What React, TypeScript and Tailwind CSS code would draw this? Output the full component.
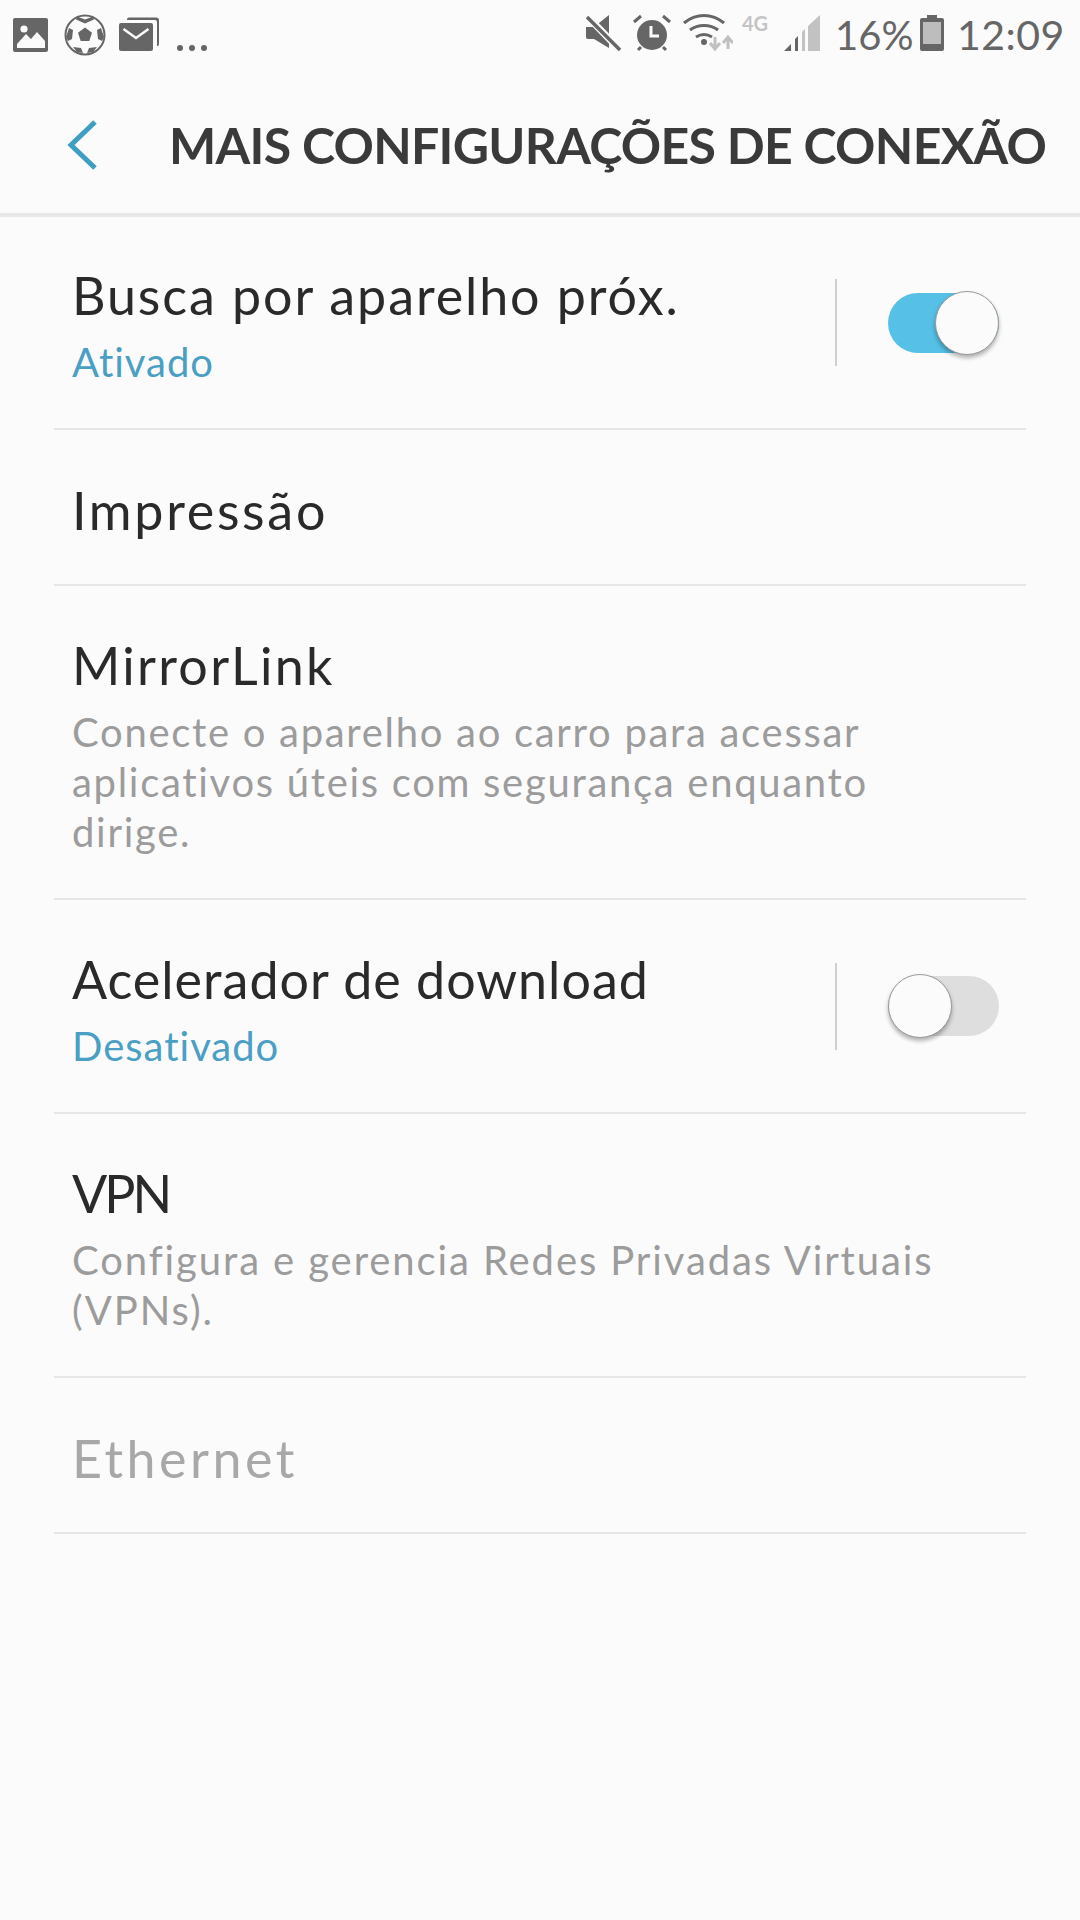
const FONT = "font-['Lato','Noto_Sans',sans-serif]";

function Toggle({ on }: { on: boolean }) {
  return (
    <div className={`flex h-[60px] w-[111px] items-center rounded-full ${on ? "justify-end bg-[#56c0e7]" : "justify-start bg-[#dedede]"}`}>
      <div className="h-[64px] w-[64px] rounded-full border border-[#9a9a9a] bg-[#fbfbfb] shadow-[0_3px_4px_rgba(0,0,0,0.3)]" />
    </div>
  );
}

function StatusLeft() {
  return (
    <div className="mb-[3px] flex items-end">
      <svg width="36" height="34" viewBox="0 0 36 34" className="ml-[13px]">
        <rect width="35" height="34" rx="2" fill="#666" />
        <path d="M4 26l9-10 5 5 6-7 8 9v7H4z" fill="#fbfbfb" />
        <circle cx="11" cy="11" r="3.6" fill="#fbfbfb" />
      </svg>
      <svg width="42" height="42" viewBox="0 0 42 42" className="ml-[15px] mb-[-4px]">
        <circle cx="21" cy="21" r="19.5" fill="#fbfbfb" stroke="#666" strokeWidth="2" />
        <path d="M21 13.500l7 5.200-2.700 8.300h-8.600l-2.700-8.300z" fill="#666" />
        <path d="M13 2.500l8 3 8-3 1 3-9 4-9-4zM2 23l3-9 4 2-1 9-4 2zM40 23l-3-9-4 2 1 9 4 2zM9 33l8 1 2 5-6-1zM33 33l-8 1-2 5 6-1z" fill="#666" />
      </svg>
      <svg width="41" height="35" viewBox="0 0 41 35" className="ml-[13px]">
        <path d="M8 2.500a2 2 0 0 1 2-2h27a3 3 0 0 1 3 3v24a2 2 0 0 1-2 1.500v-24a2 2 0 0 0-2-2H8z" fill="#666" />
        <rect y="6" width="34" height="28" rx="2" fill="#666" />
        <path d="M4.500 12l12.500 9 12.500-9" fill="none" stroke="#fbfbfb" strokeWidth="2.500" />
      </svg>
      <div className="mb-[1px] ml-[17px] flex gap-[6px]">
        <div className="h-[6px] w-[6px] rounded-full bg-[#666]" />
        <div className="h-[6px] w-[6px] rounded-full bg-[#666]" />
        <div className="h-[6px] w-[6px] rounded-full bg-[#666]" />
      </div>
    </div>
  );
}

function StatusRight() {
  return (
    <div className="flex items-center">
      <svg width="36" height="37" viewBox="0 0 36 37">
        <path d="M0 13h8l15-12v33L8 25H2a2 2 0 0 1-2-2z" fill="#666" />
        <path d="M1 2l32 33" stroke="#fbfbfb" strokeWidth="7" />
        <path d="M1 3l33 33" stroke="#666" strokeWidth="3.500" />
      </svg>
      <svg width="38" height="38" viewBox="0 0 38 38" className="ml-[11px]">
        <circle cx="19" cy="21" r="15" fill="#666" />
        <path d="M1 8l7-6M37 8l-7-6M8 33l-3 3M30 33l3 3" stroke="#666" strokeWidth="3" />
        <path d="M18 12v10h8" fill="none" stroke="#fbfbfb" strokeWidth="3" />
      </svg>
      <svg width="50" height="38" viewBox="0 0 50 38" className="ml-[12px]">
        <path d="M1 9c12-10 28-10 40 0M7 16c8-6 20-6 28 0M13 23c5-3 11-3 16 0" fill="none" stroke="#666" strokeWidth="3" />
        <circle cx="21" cy="28" r="3" fill="#666" />
        <path d="M32 23v10M27 29l5 6 5-6M45 35V24M40 29l5-6 5 6" fill="none" stroke="#c0c0c0" strokeWidth="3" />
      </svg>
      <div className="ml-[9px] flex h-[37px] w-[36px] items-start">
        <span className="text-[20px] leading-[18px] font-bold text-[#c4c4c4]">4G</span>
      </div>
      <svg width="36" height="36" viewBox="0 0 36 36" className="ml-[6px]">
        <path d="M0 36l7-7v7zM11 36V24l3-3v15z" fill="#666" />
        <path d="M18 36V17l3-3v22zM24 11l12-11v36H24z" fill="#c2c2c2" />
      </svg>
      <span className="mt-[4px] ml-[15px] w-[78px] text-[40px] leading-none text-[#666]">16%</span>
      <svg width="24" height="36" viewBox="0 0 24 36" className="ml-[7px]">
        <path d="M7 0h10v3h5a2 2 0 0 1 2 2v29a2 2 0 0 1-2 2H2a2 2 0 0 1-2-2V5a2 2 0 0 1 2-2h5z" fill="#666" />
        <rect x="3" y="7" width="18" height="22" fill="#bdbdbd" />
      </svg>
      <span className="mt-[4px] ml-[13px] w-[106px] text-[41px] leading-none tracking-[0.5px] text-[#666]">12:09</span>
    </div>
  );
}

function Row({ title, titleCls, sub, subCls, subBlue, toggle, disabled, h }: {
  title: string;
  titleCls: string;
  sub?: string[];
  subCls?: string;
  subBlue?: boolean;
  toggle?: boolean;
  disabled?: boolean;
  h: string;
}) {
  return (
    <div className={`mx-[54px] flex items-center border-b-2 border-[#e6e6e6] ${h}`}>
      <div className={`min-w-0 flex-1 pl-[18px] ${sub ? "pt-[5px]" : "pt-[5px]"}`}>
        <div className={`text-[52px] leading-[64px] ${titleCls} ${disabled ? "text-[#a8a8a8]" : "text-[#2a2a2a]"}`}>{title}</div>
        {sub && (
          <div className={`mt-[10px] text-[40px] leading-[50px] ${subCls} ${subBlue ? "text-[#4a9fc4]" : "text-[#9c9c9c]"}`}>
            {sub.map((line) => (
              <div key={line} className="whitespace-nowrap">{line}</div>
            ))}
          </div>
        )}
      </div>
      {toggle !== undefined && (
        <div className="flex items-center">
          <div className="h-[87px] w-[2px] bg-[#cfcfcf]" />
          <div className="mr-[27px] ml-[51px]">
            <Toggle on={toggle} />
          </div>
        </div>
      )}
    </div>
  );
}

export default function App() {
  return (
    <div className={`h-[1920px] w-[1080px] overflow-hidden bg-[#fbfbfb] ${FONT}`}>
      <div className="flex h-[70px] items-end justify-between pr-[17px] pb-[15px]">
        <StatusLeft />
        <StatusRight />
      </div>
      <div className="flex h-[147px] items-center border-b-4 border-[#e8e8e8] pt-[6px]">
        <svg width="30" height="50" viewBox="0 0 30 50" className="ml-[67px]">
          <path d="M28 2L4 25l24 23" fill="none" stroke="#3f9fc2" strokeWidth="5" />
        </svg>
        <div className="ml-[72px] text-[50px] leading-none font-bold tracking-[-0.7px] whitespace-nowrap text-[#3a3a3a]">MAIS CONFIGURAÇÕES DE CONEXÃO</div>
      </div>
      <Row h="h-[213px]" title="Busca por aparelho próx." titleCls="tracking-[1.9px]" sub={["Ativado"]} subCls="tracking-[1px]" subBlue toggle={true} />
      <Row h="h-[156px]" title="Impressão" titleCls="tracking-[2.7px]" />
      <Row h="h-[314px]" title="MirrorLink" titleCls="tracking-[2.3px]" sub={["Conecte o aparelho ao carro para acessar", "aplicativos úteis com segurança enquanto", "dirige."]} subCls="tracking-[1.7px]" />
      <Row h="h-[214px]" title="Acelerador de download" titleCls="tracking-[1px]" sub={["Desativado"]} subCls="tracking-[1px]" subBlue toggle={false} />
      <Row h="h-[264px]" title="VPN" titleCls="tracking-[-3px]" sub={["Configura e gerencia Redes Privadas Virtuais", "(VPNs)."]} subCls="tracking-[1.9px]" />
      <Row h="h-[156px]" title="Ethernet" titleCls="tracking-[3.5px]" disabled />
    </div>
  );
}
